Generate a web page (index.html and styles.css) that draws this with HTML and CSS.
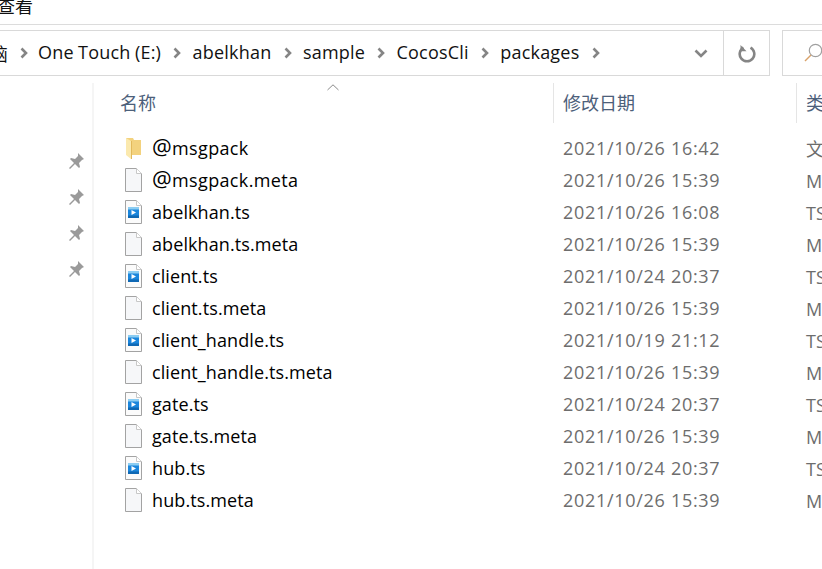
FILE: index.html
```html
<!DOCTYPE html>
<html lang="zh">
<head>
<meta charset="utf-8">
<title>packages</title>
<link rel="stylesheet" href="styles.css">
</head>
<body>
<svg class="defs" width="0" height="0" aria-hidden="true">
  <symbol id="file" viewBox="0 0 17 24">
    <path d="M.5.5h11l5 5v18H.5z" fill="#f6f7f9" stroke="#a3a3a3"/>
    <path d="M11.500.5v5h5" fill="#fff" stroke="#c8c8c8"/>
  </symbol>
  <symbol id="ts" viewBox="0 0 17 24">
    <path d="M.5.5h11l5 5v18H.5z" fill="#fbfbfb" stroke="#a3a3a3"/>
    <path d="M11.500.5v5h5" fill="#fff" stroke="#c8c8c8"/>
    <rect x="3" y="7" width="11" height="11" fill="#1b86dc"/>
    <rect x="3" y="7" width="11" height="2.500" fill="#8ccdf2"/>
    <rect x="3" y="15.500" width="11" height="2.500" fill="#0f68b4"/>
    <path d="M6.500 10l4.500 2.500-4.500 2.500z" fill="#fff"/>
  </symbol>
  <symbol id="folder" viewBox="0 0 17 24">
    <path d="M1 2h7l1 2h7v15H6z" fill="#f3d27e"/>
    <path d="M1 2l5 3v18l-5-4z" fill="#fbe9ae"/>
    <path d="M6 5h1v18H6z" fill="#e2b95c"/>
  </symbol>
  <symbol id="pin" viewBox="0 0 18 18">
    <path d="M11 1l6 6-2 1-3 3 1 4-1 1-4-4-5 5-1-1 5-5-4-4 1-1 4 1 3-3z" fill="#9a9a9a"/>
  </symbol>
  <symbol id="chev" viewBox="0 0 8 12">
    <path d="M1.500 1.500L6 6l-4.500 4.500" fill="none" stroke="#858585" stroke-width="2.600"/>
  </symbol>
</svg>

<header class="ribbon"><span class="tab">查看</span></header>

<nav class="navbar">
  <div class="address">
    <ol class="crumbs">
      <li class="crumb crumb-cut">电脑</li>
      <li class="sep sep-first"><svg class="chev"><use href="#chev"/></svg></li>
      <li class="crumb">One Touch (E:)</li>
      <li class="sep"><svg class="chev"><use href="#chev"/></svg></li>
      <li class="crumb">abelkhan</li>
      <li class="sep"><svg class="chev"><use href="#chev"/></svg></li>
      <li class="crumb">sample</li>
      <li class="sep"><svg class="chev"><use href="#chev"/></svg></li>
      <li class="crumb">CocosCli</li>
      <li class="sep"><svg class="chev"><use href="#chev"/></svg></li>
      <li class="crumb">packages</li>
      <li class="sep"><svg class="chev"><use href="#chev"/></svg></li>
    </ol>
    <button class="addr-btn drop" aria-label="历史">
      <svg width="14" height="9" viewBox="0 0 14 9"><path d="M1.500 1.500L7 7l5.500-5.500" fill="none" stroke="#858585" stroke-width="2.600"/></svg>
    </button>
    <button class="addr-btn refresh" aria-label="刷新">
      <svg width="18" height="19" viewBox="0 0 18 19"><path d="M5.500 3.600A7.300 7.300 0 1 0 12.500 3.600" fill="none" stroke="#858585" stroke-width="2.600"/><path d="M2.500 1v6.200h6z" fill="#858585"/></svg>
    </button>
  </div>
  <div class="search">
    <svg width="18" height="20" viewBox="0 0 18 20"><circle cx="11.500" cy="7.500" r="6.200" fill="none" stroke="#a0a0a0" stroke-width="1.200"/><path d="M7 12l-6 6" stroke="#d9a26a" stroke-width="1.500"/></svg>
  </div>
</nav>

<main class="main">
  <aside class="quick">
    <svg class="pin"><use href="#pin"/></svg>
    <svg class="pin"><use href="#pin"/></svg>
    <svg class="pin"><use href="#pin"/></svg>
    <svg class="pin"><use href="#pin"/></svg>
  </aside>
  <section class="list">
    <div class="head">
      <div class="hcell hname">名称<svg class="sort" width="12" height="7" viewBox="0 0 12 7"><path d="M.5 6L6 .8 11.500 6" fill="none" stroke="#8a8a8a"/></svg></div>
      <div class="hcell hdate">修改日期</div>
      <div class="hcell htype">类型</div>
    </div>
    <div class="rows">
      <div class="row"><span class="name"><svg class="ico"><use href="#folder"/></svg><span class="at-name"><span class="at">@</span>msgpack</span></span><span class="date">2021/10/26 16:42</span><span class="type">文件夹</span></div>
      <div class="row"><span class="name"><svg class="ico"><use href="#file"/></svg><span class="at-name"><span class="at">@</span>msgpack.meta</span></span><span class="date">2021/10/26 15:39</span><span class="type">META 文件</span></div>
      <div class="row"><span class="name"><svg class="ico"><use href="#ts"/></svg>abelkhan.ts</span><span class="date">2021/10/26 16:08</span><span class="type">TS 文件</span></div>
      <div class="row"><span class="name"><svg class="ico"><use href="#file"/></svg>abelkhan.ts.meta</span><span class="date">2021/10/26 15:39</span><span class="type">META 文件</span></div>
      <div class="row"><span class="name"><svg class="ico"><use href="#ts"/></svg>client.ts</span><span class="date">2021/10/24 20:37</span><span class="type">TS 文件</span></div>
      <div class="row"><span class="name"><svg class="ico"><use href="#file"/></svg>client.ts.meta</span><span class="date">2021/10/26 15:39</span><span class="type">META 文件</span></div>
      <div class="row"><span class="name"><svg class="ico"><use href="#ts"/></svg>client_handle.ts</span><span class="date">2021/10/19 21:12</span><span class="type">TS 文件</span></div>
      <div class="row"><span class="name"><svg class="ico"><use href="#file"/></svg>client_handle.ts.meta</span><span class="date">2021/10/26 15:39</span><span class="type">META 文件</span></div>
      <div class="row"><span class="name"><svg class="ico"><use href="#ts"/></svg>gate.ts</span><span class="date">2021/10/24 20:37</span><span class="type">TS 文件</span></div>
      <div class="row"><span class="name"><svg class="ico"><use href="#file"/></svg>gate.ts.meta</span><span class="date">2021/10/26 15:39</span><span class="type">META 文件</span></div>
      <div class="row"><span class="name"><svg class="ico"><use href="#ts"/></svg>hub.ts</span><span class="date">2021/10/24 20:37</span><span class="type">TS 文件</span></div>
      <div class="row"><span class="name"><svg class="ico"><use href="#file"/></svg>hub.ts.meta</span><span class="date">2021/10/26 15:39</span><span class="type">META 文件</span></div>
    </div>
  </section>
</main>
</body>
</html>
```

FILE: styles.css
```css
* { box-sizing: border-box; }
html, body { margin: 0; height: 100%; }
body {
  width: 822px;
  height: 569px;
  overflow: hidden;
  background: #fff;
  color: #111;
  font-family: "Open Sans", "Noto Sans CJK SC", sans-serif;
  font-size: 18px;
  display: flex;
  flex-direction: column;
}
.defs { display: block; height: 0; }
.ribbon {
  flex: none;
  height: 25px;
  border-bottom: 1px solid #dcdcdc;
  overflow: hidden;
}
.tab {
  display: block;
  margin: -7px 0 0 -3px;
  font-family: "Noto Sans CJK SC", sans-serif;
  font-size: 18px;
  line-height: 24px;
}
.navbar {
  flex: none;
  display: flex;
  height: 46px;
  margin-top: 5px;
  gap: 12px;
}
.address {
  flex: none;
  width: 770px;
  display: flex;
  align-items: stretch;
  border-top: 1px solid #d9d9d9;
  border-bottom: 1px solid #d9d9d9;
  border-right: 1px solid #d9d9d9;
}
.crumbs {
  flex: 1;
  display: flex;
  align-items: center;
  list-style: none;
  margin: 0;
  padding: 0;
  overflow: hidden;
  min-width: 0;
  letter-spacing: .2px;
  word-spacing: -.5px;
}
.crumb { flex: none; white-space: nowrap; margin-top: -2px; }
.crumb-cut {
  width: 8px;
  direction: rtl;
  overflow: hidden;
  font-family: "Noto Sans CJK SC", sans-serif;
  margin-top: 0;
}
.sep {
  flex: none;
  width: 31.500px;
  display: flex;
  justify-content: center;
  padding-left: 1px;
}
.sep-first { width: 30px; }
.chev { width: 8px; height: 12px; }
.addr-btn {
  flex: none;
  display: flex;
  align-items: center;
  justify-content: center;
  padding: 0;
  background: none;
  border: 0;
}
.drop { width: 47px; padding-left: 3px; }
.refresh { width: 46px; border-left: 1px solid #d9d9d9; }
.search {
  flex: 1;
  display: flex;
  align-items: center;
  padding-left: 21px;
  border: solid #d9d9d9;
  border-width: 1px 0 1px 1px;
}
.main { flex: 1; display: flex; padding-top: 7px; min-height: 0; }
.quick {
  flex: none;
  width: 94px;
  border-right: 2px solid #f5f5f5;
  display: flex;
  flex-direction: column;
  gap: 18px;
  align-items: flex-end;
  padding: 69px 7px 0 0;
}
.pin { width: 18px; height: 18px; display: block; }
.list { flex: 1; min-width: 0; }
.head {
  display: grid;
  grid-template-columns: 460px 243px 1fr;
  height: 40px;
  color: #4c607a;
  font-family: "Noto Sans CJK SC", sans-serif;
  font-size: 18px;
}
.hcell {
  display: flex;
  align-items: center;
  padding: 0 0 2px 9px;
  border-right: 1px solid #e5e5e5;
  position: relative;
  white-space: nowrap;
}
.hname { padding-left: 26px; }
.htype { border-right: 0; }
.sort { position: absolute; left: 233px; top: 1px; }
.rows { padding-top: 9px; }
.row {
  display: grid;
  grid-template-columns: 460px 243px 1fr;
  height: 32px;
  align-items: center;
  white-space: nowrap;
}
.name { display: flex; align-items: center; padding-left: 31px; color: #000; letter-spacing: .1px; }
.at-name { letter-spacing: .35px; }
.at { font-size: 22px; line-height: 18px; }
.date { color: #6d6d6d; padding-left: 9px; letter-spacing: .7px; }
.type { color: #6d6d6d; padding-left: 9px; }
.ico { flex: none; width: 17px; height: 24px; margin-right: 10px; }
```
